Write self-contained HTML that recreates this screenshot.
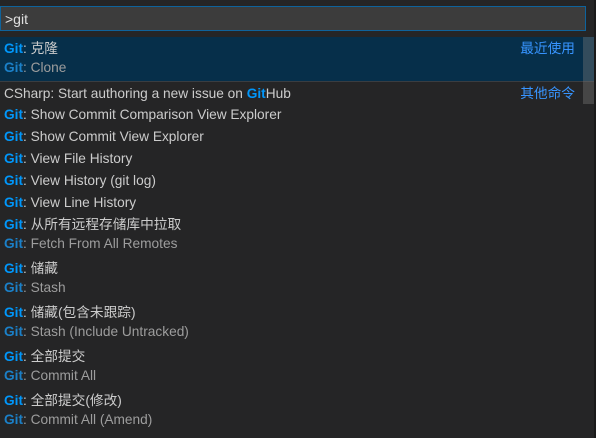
<!DOCTYPE html>
<html><head><meta charset="utf-8"><style>
html,body{margin:0;padding:0;width:596px;height:438px;overflow:hidden;background:#252526;}
body{position:relative;font-family:"Liberation Sans","Noto Sans CJK SC",sans-serif;font-size:13.7px;color:#cccccc;}
.inp{position:absolute;left:0;top:6px;width:584px;height:23px;background:#3c3c3c;border:1px solid #0e639c;box-sizing:content-box;}
.inp span{position:absolute;left:4px;top:0;line-height:24px;color:#e0e0e0;font-size:14px;}
.sel{position:absolute;left:0;top:37px;width:594px;height:44px;background:#062f4a;border-bottom:1px solid #3a3d41;}
.sb{position:absolute;left:583px;top:37px;width:11px;height:67px;background:rgba(121,121,121,0.4);}
.edge{position:absolute;left:594px;top:0;width:2px;height:438px;background:#1a1a1a;}
.r{position:absolute;left:4px;height:22px;line-height:24px;white-space:nowrap;}
.g{color:#0097fb;font-weight:bold;}
.d{color:#9d9d9d;}
.d .g{color:#1b80c8;}
.rt{position:absolute;right:21px;height:22px;line-height:24px;color:#3794ff;}
</style></head><body>
<div class="inp"><span>&gt;git</span></div>
<div class="sel"></div>
<div class="sb"></div>
<div class="edge"></div>
<div class="r" style="top:37px"><span class="g">Git</span>: 克隆</div>
<div class="r d" style="top:56px"><span class="g">Git</span>: Clone</div>
<div class="rt" style="top:37px">最近使用</div>
<div class="r" style="top:82px">CSharp: Start authoring a new issue on <span class="g">Git</span>Hub</div>
<div class="rt" style="top:82px">其他命令</div>
<div class="r" style="top:103px"><span class="g">Git</span>: Show Commit Comparison View Explorer</div>
<div class="r" style="top:125px"><span class="g">Git</span>: Show Commit View Explorer</div>
<div class="r" style="top:147px"><span class="g">Git</span>: View File History</div>
<div class="r" style="top:169px"><span class="g">Git</span>: View History (git log)</div>
<div class="r" style="top:191px"><span class="g">Git</span>: View Line History</div>
<div class="r" style="top:213px"><span class="g">Git</span>: 从所有远程存储库中拉取</div>
<div class="r d" style="top:232px"><span class="g">Git</span>: Fetch From All Remotes</div>
<div class="r" style="top:257px"><span class="g">Git</span>: 储藏</div>
<div class="r d" style="top:276px"><span class="g">Git</span>: Stash</div>
<div class="r" style="top:301px"><span class="g">Git</span>: 储藏(包含未跟踪)</div>
<div class="r d" style="top:320px"><span class="g">Git</span>: Stash (Include Untracked)</div>
<div class="r" style="top:345px"><span class="g">Git</span>: 全部提交</div>
<div class="r d" style="top:364px"><span class="g">Git</span>: Commit All</div>
<div class="r" style="top:389px"><span class="g">Git</span>: 全部提交(修改)</div>
<div class="r d" style="top:408px"><span class="g">Git</span>: Commit All (Amend)</div>
</body></html>
